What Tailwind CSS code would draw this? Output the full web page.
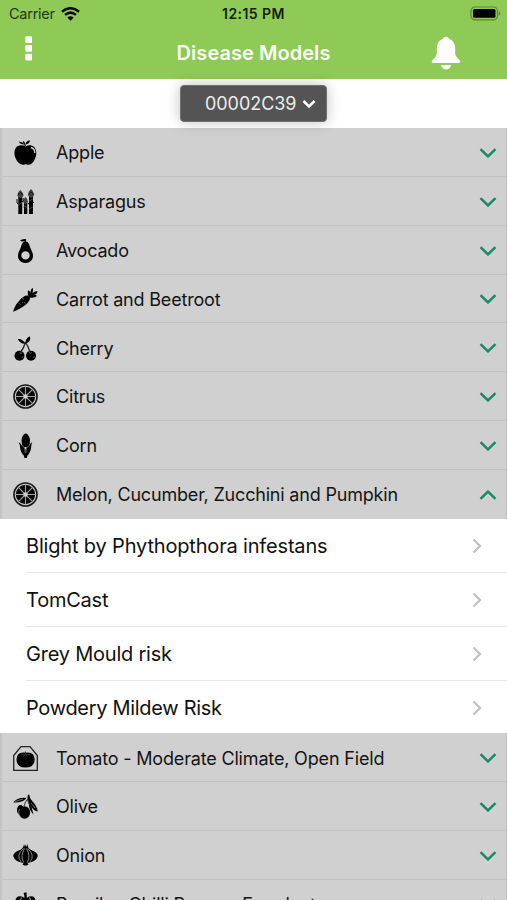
<!DOCTYPE html>
<html lang="en">
<head>
<meta charset="utf-8">
<title>Disease Models</title>
<script src="https://cdn.jsdelivr.net/npm/@tailwindcss/browser@4"></script>
</head>
<body class="bg-white">
<svg class="hidden">
  <symbol id="down" viewBox="0 0 18 10"><path d="M1.500 1.200L9 8.400L16.500 1.200" fill="none" stroke="#168a66" stroke-width="2.500"/></symbol>
  <symbol id="up" viewBox="0 0 18 10"><path d="M1.500 8.800L9 1.600L16.500 8.800" fill="none" stroke="#168a66" stroke-width="2.500"/></symbol>
  <symbol id="next" viewBox="0 0 10 16"><path d="M1.500 1.500L8 8L1.500 14.500" fill="none" stroke="#c0c0c2" stroke-width="2.200"/></symbol>
  <symbol id="citrus" viewBox="0 0 25 25">
    <circle cx="12.500" cy="12.500" r="11.500" fill="none" stroke="#181818" stroke-width="1.700"/>
    <circle cx="12.500" cy="12.500" r="9.700" fill="#080808"/>
    <path d="M12.500 2.500V22.500M2.500 12.500H22.500M5.400 5.400L19.600 19.600M19.600 5.400L5.400 19.600" stroke="#a5a5a5" stroke-width="1.100"/>
    <rect x="10.500" y="10.500" width="4" height="4" rx="1" fill="#d0d0d0"/>
  </symbol>
</svg>
<div class="h-[900px] w-[507px] overflow-hidden bg-white font-['Inter','Liberation_Sans',sans-serif] text-[#141414]">
  <header class="h-[79.300px] bg-[#8fca56]">
    <div class="grid h-[27px] grid-cols-3 items-center px-[9px]">
      <div class="flex items-center gap-[6px] text-[14.500px] text-[#24371a]">
        <span class="tracking-[-0.250px]">Carrier</span>
        <svg class="h-[14px] w-[19px]" viewBox="0 0 19 14"><path d="M1 4.700Q9.500-2.200 18 4.700M4 7.900Q9.500 3.400 15 7.900" fill="none" stroke="#080b05" stroke-width="2.500"/><path d="M6.300 10.500Q9.500 7.900 12.700 10.500L9.500 13.700Z" fill="#080b05"/></svg>
      </div>
      <div class="text-center text-[14px] font-semibold tracking-[0.450px] text-[#13200b]">12:15 PM</div>
      <svg class="mr-[-4px] ml-auto h-[15px] w-[32px]" viewBox="0 0 32 15"><rect x="1" y="1" width="26.500" height="12.800" rx="4" fill="none" stroke="#5f873a" stroke-width="1.200"/><rect x="3" y="3" width="22.500" height="8.800" rx="1.500" fill="#000"/><path d="M28.700 5Q32 7.400 28.700 9.800Z" fill="#5f873a"/></svg>
    </div>
    <div class="grid h-[50px] grid-cols-[100px_1fr_100px] items-center">
      <svg class="mb-[8px] ml-[25px] h-[25px] w-[8px]" viewBox="0 0 8 25"><g fill="#fff"><rect x="0.300" y="0.300" width="6.700" height="6.700" rx="1.300"/><rect x="0.300" y="9" width="6.700" height="6.700" rx="1.300"/><rect x="0.300" y="17.800" width="6.700" height="6.700" rx="1.300"/></g></svg>
      <h1 class="pt-[1px] text-center text-[20px] font-semibold tracking-[0.050px] text-[#fbfff6]">Disease Models</h1>
      <svg class="mt-[2px] ml-[24px] h-[34px] w-[30px]" viewBox="0 0 30 34"><path d="M15 .7C13.100.7 12.200 1.900 11.500 3C7.600 4.500 5.800 8.500 5.800 12.500V17C5.800 19.300 4.800 20.600 3.500 22L1.200 24.500C.2 26 .8 27 2.300 27H27.700C29.200 27 29.800 26 28.800 24.500L26.500 22C25.200 20.600 24.200 19.300 24.200 17V12.500C24.200 8.500 22.400 4.500 18.500 3C17.800 1.900 16.900.7 15 .7ZM10 29H20C19.500 31.800 17.500 33.500 15 33.500S10.500 31.800 10 29Z" fill="#fff"/></svg>
    </div>
  </header>
  <div class="flex h-[49px] justify-center pt-[6px]">
    <button class="flex h-[37px] w-[147px] items-center rounded-[4px] border border-[#6f6f6f] bg-[#545454] pl-[24px] text-[18px] text-[#ececec] shadow-[0_0_14px_rgba(0,0,0,0.25)]">
      <span class="tracking-[-0.050px]">00002C39</span>
      <svg class="ml-[6px] h-[10px] w-[14px] shrink-0" viewBox="0 0 14 10"><path d="M1.500 2L7 7.500L12.500 2" fill="none" stroke="#fff" stroke-width="2.500"/></svg>
    </button>
  </div>

  <main class="text-[18px] tracking-[-0.190px]">
    <section class="border-r border-l-2 border-r-[#bdbdbd] border-l-[#c4c4c4] bg-[#d0d0d0]">
      <div class="flex h-[48.800px] items-center border-b border-[#c2c2c2] pt-[1.500px] pr-[9px] pl-[11px]">
        <svg class="mr-[18px] h-[25px] w-[25px]" viewBox="0 0 25 25"><path d="M12.500 6.500C15 4.800 18.500 4.800 20.800 6.800C23.800 9.500 24 14.500 22 18.800C20.500 22.500 18 25 15.500 24.700C13.800 24 11.800 24 10.200 24.700C7.500 25 4.500 22.500 2.800 18.800C.8 14.500 1 9.500 3.800 6.800C6.200 4.800 10 4.800 12.500 6.500Z"/><path d="M12.300 6Q12 3.500 10.200 1.500" fill="none" stroke="#000" stroke-width="1.200"/><path d="M5.500 1.800Q9 1 11.500 4.300Q8 5 5.500 1.800ZM12.500 4.500Q13 .5 17 .2Q16.500 4 12.500 4.500Z"/><path d="M18 7.500Q21.800 8.500 21.800 13" fill="none" stroke="#ccc" stroke-width="1.300"/></svg>
        <span class="flex-1">Apple</span><svg class="h-[10px] w-[18px]"><use href="#down"/></svg>
      </div>
      <div class="flex h-[48.800px] items-center border-b border-[#c2c2c2] pt-[1.500px] pr-[9px] pl-[11px]">
        <svg class="mr-[18px] h-[25px] w-[25px]" viewBox="0 0 25 25"><path d="M5.300 7H9.200V25H5.300ZM11 13.500H14.300V25H11ZM16 6H20V25H16Z"/><path d="M4.500 7Q4.500 3 7.300 1Q10.500 3.500 10.500 7L7.300 9.500ZM15 6.500Q15 2.500 17.800 0Q21 2.500 21 6.500L18 9ZM10 13Q10.500 9.500 12.500 8Q15 10 15 13L12.500 15.500Z" fill="#444"/><path d="M4.800 6L7.300 3.500L10 6M15.500 5.500L18 2.700L20.700 5.500M4 10V14L6 16M10.200 9V12L8.500 13.500M15 14L17 16.500M21 13L18.500 15M10.500 18L13 20" fill="none" stroke="#111" stroke-width="1"/><path d="M5.500 16L9 13.500M16.300 12L19.800 10M16.200 20L19.800 18M11 17L14 18.500" stroke="#888" stroke-width=".6"/></svg>
        <span class="flex-1">Asparagus</span><svg class="h-[10px] w-[18px]"><use href="#down"/></svg>
      </div>
      <div class="flex h-[48.800px] items-center border-b border-[#c2c2c2] pt-[1.500px] pr-[9px] pl-[11px]">
        <svg class="mr-[18px] h-[25px] w-[25px]" viewBox="0 0 25 25"><path fill-rule="evenodd" d="M12.500 3.500C15.500 3.500 16.300 6.500 17.200 9.500C18.300 12.500 20 14.500 20 18C20 22 16.800 25 12.500 25S5 22 5 18C5 14.500 6.700 12.500 7.800 9.500C8.700 6.500 9.500 3.500 12.500 3.500ZM12.500 13.200A4.200 4.200 0 1 0 12.500 21.600A4.200 4.200 0 1 0 12.500 13.200Z"/><path d="M7 2.500Q10 .2 13.200 1.200L12.800 4Q11.500 3.200 10.500 3.300Q9 4 7 2.500Z"/><path d="M12.200 4.500V2" stroke="#000"/></svg>
        <span class="flex-1">Avocado</span><svg class="h-[10px] w-[18px]"><use href="#down"/></svg>
      </div>
      <div class="flex h-[48.800px] items-center border-b border-[#c2c2c2] pt-[1.500px] pr-[9px] pl-[11px]">
        <svg class="mr-[18px] h-[25px] w-[25px]" viewBox="0 0 25 25"><path d="M.1 24.800Q1 19.500 6 14Q11 8 14.500 8.500Q17.800 9.500 16.800 12.500Q15 16.500 9.500 20Q5 23 .1 24.800Z"/><path d="M15.500 9.500Q14 5 15.500 3.200Q17 4 17.300 6Q17.500 2 19.500.8Q20.800 3 19.500 6Q22.500 3.500 24.800 4.500Q24 7 21 7.700Q23 7.500 24 9Q22 11.200 16.500 10.500Z"/><path d="M9 11L11 12.500M5.500 16L7.500 17.500M12.500 16.500L11 15.200M9 15L10 16" stroke="#777" stroke-width=".8"/></svg>
        <span class="flex-1">Carrot and Beetroot</span><svg class="h-[10px] w-[18px]"><use href="#down"/></svg>
      </div>
      <div class="flex h-[48.800px] items-center border-b border-[#c2c2c2] pt-[1.500px] pr-[9px] pl-[11px]">
        <svg class="mr-[18px] h-[25px] w-[25px]" viewBox="0 0 25 25"><circle cx="6.500" cy="19.800" r="5"/><circle cx="18" cy="19.800" r="5"/><path d="M12.500 6Q11 12 7.200 17M12.500 6Q15 10 17.300 17" fill="none" stroke="#222" stroke-width="1.300"/><path d="M12.500 7.800Q7 8.200 4.800 3Q9.500 2.500 12.500 7.800ZM12.500 7.500Q12 2.500 17 .3Q18.300 6 12.500 7.500Z"/><path d="M6.500 16.500L8 17.500L9.200 16.500M16 16.500L17.500 17.500L19 16.500M9 22L10.200 20M20.500 22L21.700 20" fill="none" stroke="#777" stroke-width=".7"/></svg>
        <span class="flex-1">Cherry</span><svg class="h-[10px] w-[18px]"><use href="#down"/></svg>
      </div>
      <div class="flex h-[48.800px] items-center border-b border-[#c2c2c2] pt-[1.500px] pr-[9px] pl-[11px]">
        <svg class="mr-[18px] h-[25px] w-[25px]"><use href="#citrus"/></svg>
        <span class="flex-1">Citrus</span><svg class="h-[10px] w-[18px]"><use href="#down"/></svg>
      </div>
      <div class="flex h-[48.800px] items-center border-b border-[#c2c2c2] pt-[1.500px] pr-[9px] pl-[11px]">
        <svg class="mr-[18px] h-[25px] w-[25px]" viewBox="0 0 25 25"><path d="M12.800.2Q17 2.500 17 7.500Q17 11 15.500 14H10Q8.500 11 8.500 7.500Q8.500 2.500 12.800.2Z"/><path d="M5.500 9Q7.500 10 8.500 12Q11.500 13 12.500 17Q13.500 13 16.500 12Q17.500 10 19.300 9Q18.300 11 18.300 13Q18 19 14.500 22.500L13.800 25H11.500L10.800 22.500Q7 19 7 13Q6.800 11 5.500 9Z"/><path d="M8.300 12Q12 13.500 12.200 20M16.800 12Q13 13.500 12.800 20" fill="none" stroke="#888" stroke-width=".7"/></svg>
        <span class="flex-1">Corn</span><svg class="h-[10px] w-[18px]"><use href="#down"/></svg>
      </div>
      <div class="flex h-[48.800px] items-center pt-[1px] pr-[9px] pl-[11px]">
        <svg class="mr-[18px] h-[25px] w-[25px]"><use href="#citrus"/></svg>
        <span class="flex-1">Melon, Cucumber, Zucchini and Pumpkin</span><svg class="h-[10px] w-[18px]"><use href="#up"/></svg>
      </div>
    </section>

    <section class="bg-white text-[20px] tracking-[-0.220px] text-[#101010]">
      <div class="flex h-[53.700px] items-center pt-[1px] pr-[25px] pl-[26px]"><span class="flex-1 tracking-[-0.170px]">Blight by Phythopthora infestans</span><svg class="h-[16px] w-[10px]"><use href="#next"/></svg></div>
      <div class="ml-[26px] flex h-[53.700px] items-center border-t border-[#e6e6e6] pr-[25px]"><span class="flex-1">TomCast</span><svg class="h-[16px] w-[10px]"><use href="#next"/></svg></div>
      <div class="ml-[26px] flex h-[53.700px] items-center border-t border-[#e6e6e6] pt-[1px] pr-[25px]"><span class="flex-1">Grey Mould risk</span><svg class="h-[16px] w-[10px]"><use href="#next"/></svg></div>
      <div class="ml-[26px] flex h-[53.700px] items-center border-t border-[#e6e6e6] pt-[1px] pr-[25px]"><span class="flex-1 tracking-[-0.300px]">Powdery Mildew Risk</span><svg class="h-[16px] w-[10px]"><use href="#next"/></svg></div>
    </section>

    <section class="border-r border-l-2 border-r-[#bdbdbd] border-l-[#c4c4c4] bg-[#d0d0d0]">
      <div class="flex h-[48.800px] items-center border-b border-[#c2c2c2] pt-[1.500px] pr-[9px] pl-[11px]">
        <svg class="mr-[18px] h-[25px] w-[25px]" viewBox="0 0 25 25"><path d="M.7 24.300V9.500L8 .7H17L24.300 9.500V24.300Z" fill="none" stroke="#222" stroke-width="1.300"/><path d="M12.500 6.800Q21.500 5.500 21.700 13.500Q21.500 21.500 12.500 21.500T3.500 13.500Q3.500 5.500 12.500 6.800Z"/><path d="M12.500 9L12.300 5.500M8 9L12 8.500L10 11M17 9L13 8.500L14.500 10.500" fill="none" stroke="#333" stroke-width="1"/></svg>
        <span class="flex-1 tracking-[-0.170px]">Tomato - Moderate Climate, Open Field</span><svg class="h-[10px] w-[18px]"><use href="#down"/></svg>
      </div>
      <div class="flex h-[48.800px] items-center border-b border-[#c2c2c2] pt-[1.500px] pr-[9px] pl-[11px]">
        <svg class="mr-[18px] h-[25px] w-[25px]" viewBox="0 0 25 25"><path d="M.2 8.500Q4 3 13.500 3.800Q11 8.800 .2 8.500Z"/><path d="M14.500 4Q14 1.500 16 .2Q17 5 20 8Q24 12 24.800 17.500Q21 17 18.500 13L20.500 20.500Q16 16 15.800 10Q14 7 14.500 4Z"/><path d="M15 4.500Q12 8 11 12M15 5Q16 10 18 13" fill="none" stroke="#333"/><ellipse cx="7.500" cy="16" rx="3.500" ry="5"/><ellipse cx="11.500" cy="18.500" rx="5.600" ry="6.200"/><path d="M6.500 15Q4.500 20 7.500 22.500M2 7.500L10 5M18 9L22 14" fill="none" stroke="#999" stroke-width=".7"/></svg>
        <span class="flex-1">Olive</span><svg class="h-[10px] w-[18px]"><use href="#down"/></svg>
      </div>
      <div class="flex h-[48.800px] items-center border-b border-[#c2c2c2] pt-[1.500px] pr-[9px] pl-[11px]">
        <svg class="mr-[18px] h-[25px] w-[25px]" viewBox="0 0 25 25"><path d="M11 1L12 4L12.500 1L13 4L14.500 1Q14.500 5.500 18 7Q24.800 9.500 24.800 13Q23.500 18.500 14.500 20L15.500 21.500L13.500 22.500H11.500L9.500 21.500L10.500 20Q1.500 18.500 .2 13Q.2 9.500 7 7Q10.500 5.500 11 1Z"/><path d="M10.500 5.500Q2.500 12 8 18.800M11.500 5.500Q7 13 10.800 19.500M13.500 5.500Q18 13 14.200 19.500M14.500 5.500Q22.500 12 17 18.800" fill="none" stroke="#999" stroke-width=".9"/></svg>
        <span class="flex-1">Onion</span><svg class="h-[10px] w-[18px]"><use href="#down"/></svg>
      </div>
      <div class="flex h-[48.800px] items-center pr-[9px] pl-[11px]">
        <svg class="mr-[18px] h-[25px] w-[25px]" viewBox="0 0 25 25"><path d="M11.500 6Q11.500 2.500 10.500 1L13.500 .2L13.800 6Q16 3.500 20 4.500Q24 6.500 22.500 14Q20 25 12.500 25T2.500 14Q1 6.500 5 4.500Q9 3.500 11.500 6Z"/><path d="M8.500 5.500Q5 12 8 22M16.500 5.500Q20 12 17 22" fill="none" stroke="#aaa"/></svg>
        <span class="flex-1">Paprika, Chilli Pepper, Eggplant</span><svg class="h-[10px] w-[18px]"><use href="#down"/></svg>
      </div>
    </section>
  </main>
</div>
</body>
</html>
